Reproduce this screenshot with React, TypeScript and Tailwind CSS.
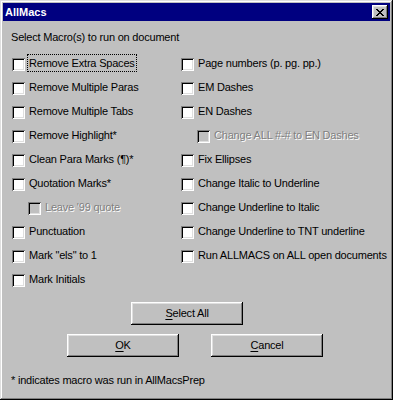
import React from "react"

const FONT = "font-['Liberation_Sans',Arial,sans-serif]"

const LEFT = [
  { label: "Remove Extra Spaces", focus: true },
  { label: "Remove Multiple Paras" },
  { label: "Remove Multiple Tabs" },
  { label: "Remove Highlight*" },
  { label: "Clean Para Marks (¶)*" },
  { label: "Quotation Marks*" },
  { label: "Leave '99 quote", sub: true },
  { label: "Punctuation" },
  { label: 'Mark "els" to 1' },
  { label: "Mark Initials" },
]

const RIGHT = [
  { label: "Page numbers (p. pg. pp.)" },
  { label: "EM Dashes" },
  { label: "EN Dashes" },
  { label: "Change ALL #-# to EN Dashes", sub: true },
  { label: "Fix Ellipses" },
  { label: "Change Italic to Underline" },
  { label: "Change Underline to Italic" },
  { label: "Change Underline to TNT underline" },
  { label: "Run ALLMACS on ALL open documents" },
]

type Item = { label: string; sub?: boolean; focus?: boolean }

function Check({ item }: { item: Item }) {
  const off = !!item.sub
  return (
    <div className={`flex items-start h-[24px] pt-[6px] ${off ? "pl-[16px]" : ""}`}>
      <span
        className={`w-[13px] h-[13px] shrink-0 ${off ? "bg-[#c0c0c0]" : "bg-white"} shadow-[inset_1px_1px_#808080,inset_-1px_-1px_#fff,inset_2px_2px_#000,inset_-2px_-2px_#dfdfdf]`}
      />
      <span
        className={`ml-[2px] -mt-[4px] h-[18px] px-[1px] flex items-center leading-none whitespace-nowrap border border-dotted ${
          item.focus ? "border-black" : "border-transparent"
        } ${off ? "text-[#808080] [text-shadow:1px_1px_0_#fff]" : "text-black"}`}
      >
        {item.label}
      </span>
    </div>
  )
}

function Button({ first, rest }: { first: string; rest: string }) {
  return (
    <button className="h-[23px] w-[112px] shrink-0 bg-[#c0c0c0] text-black shadow-[inset_-1px_-1px_#000,inset_1px_1px_#fff,inset_-2px_-2px_#808080,inset_2px_2px_#dfdfdf]">
      <span className="underline underline-offset-[2px]">{first}</span>
      {rest}
    </button>
  )
}

export default function App() {
  return (
    <div
      className={`w-[393px] h-[400px] bg-[#c0c0c0] p-[3px] flex flex-col text-[11px] tracking-[-0.2px] ${FONT} shadow-[inset_-1px_-1px_#000,inset_1px_1px_#dfdfdf,inset_-2px_-2px_#808080,inset_2px_2px_#fff]`}
    >
      {/* Title bar */}
      <div className="h-[18px] bg-[#000080] flex items-center justify-between px-[2px]">
        <span className="text-white font-bold text-[11px] tracking-normal">AllMacs</span>
        <div className="w-[16px] h-[14px] bg-[#c0c0c0] flex items-center justify-center shadow-[inset_-1px_-1px_#000,inset_1px_1px_#fff,inset_-2px_-2px_#808080,inset_2px_2px_#dfdfdf]">
          <svg width="8" height="7" viewBox="0 0 8 7" shapeRendering="crispEdges">
            <path d="M0 0h2v1h-2zM6 0h2v1h-2zM1 1h2v1h-2zM5 1h2v1h-2zM2 2h4v1h-4zM3 3h2v1h-2zM2 4h4v1h-4zM1 5h2v1h-2zM5 5h2v1h-2zM0 6h2v1h-2zM6 6h2v1h-2z" fill="#000" />
          </svg>
        </div>
      </div>

      <div className="pl-[8px] pt-[10px] text-black leading-[13px]">Select Macro(s) to run on document</div>

      {/* Options */}
      <div className="flex pl-[9px] pt-[8px]">
        <div className="w-[169px] shrink-0 flex flex-col">
          {LEFT.map(i => (
            <Check key={i.label} item={i} />
          ))}
        </div>
        <div className="flex flex-col">
          {RIGHT.map(i => (
            <Check key={i.label} item={i} />
          ))}
        </div>
      </div>

      {/* Buttons */}
      <div className="flex pl-[128px] pt-[10px]">
        <Button first="S" rest="elect All" />
      </div>
      <div className="flex pl-[64px] pt-[9px] gap-[32px]">
        <Button first="O" rest="K" />
        <Button first="C" rest="ancel" />
      </div>

      <div className="pl-[8px] pt-[17px] text-black leading-[13px]">* indicates macro was run in AllMacsPrep</div>
    </div>
  )
}
